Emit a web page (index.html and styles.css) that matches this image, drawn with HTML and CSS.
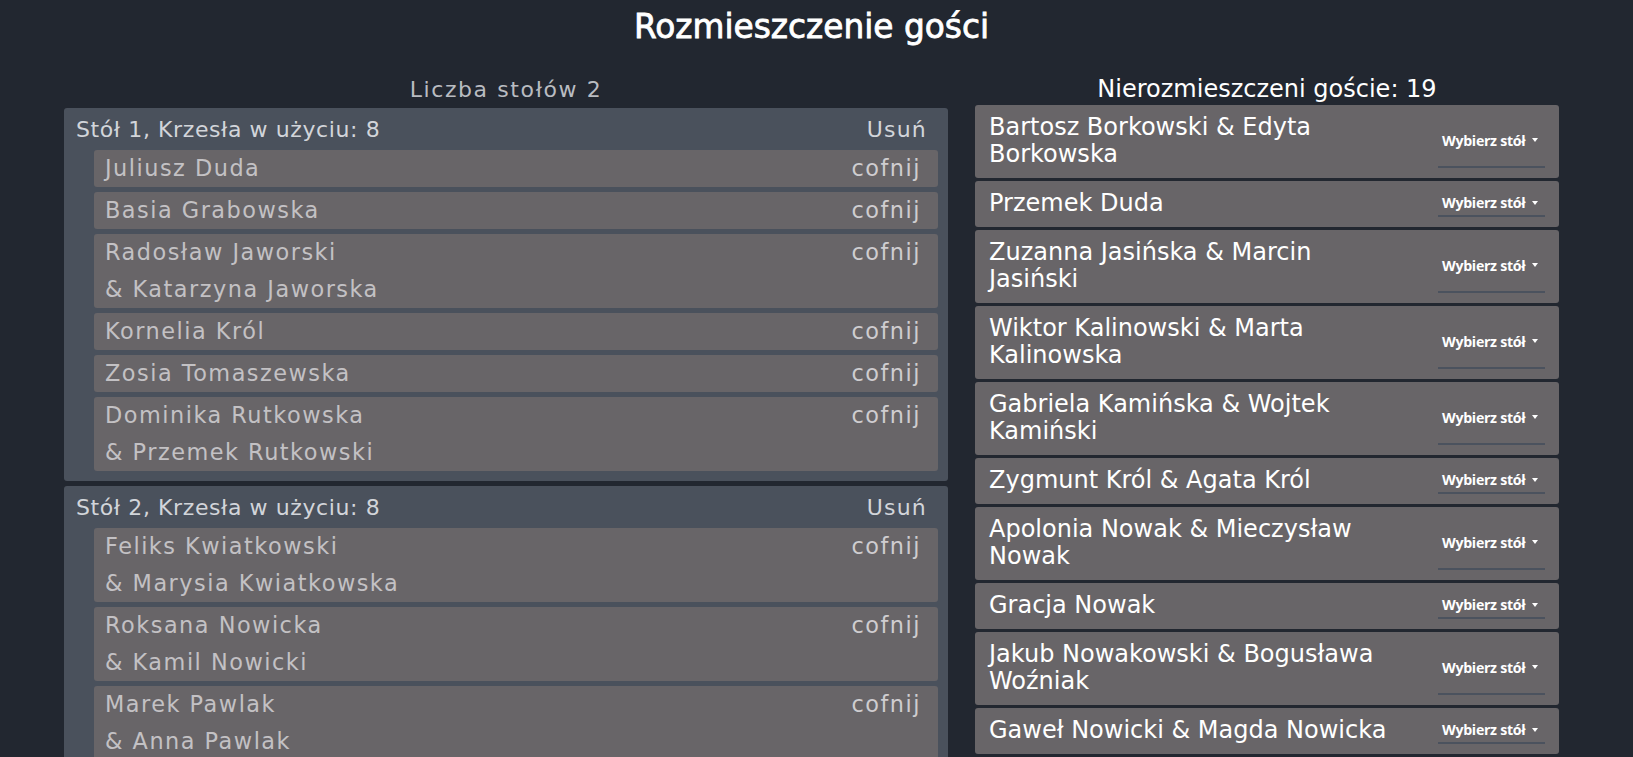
FILE: index.html
```html
<!DOCTYPE html>
<html lang="pl">
<head>
<meta charset="utf-8">
<title>Rozmieszczenie gości</title>
<link rel="stylesheet" href="styles.css">
</head>
<body>
<h1 class="title">Rozmieszczenie gości</h1>
<main class="layout">
  <section class="tables">
    <h2 class="tables-heading">Liczba stołów 2</h2>

    <div class="table-card">
      <div class="table-header"><span>Stół 1, Krzesła w użyciu: 8</span><button class="remove-btn">Usuń</button></div>
      <ul class="seated">
        <li class="seat"><div class="seat-names"><div>Juliusz Duda</div></div><button class="undo-btn">cofnij</button></li>
        <li class="seat"><div class="seat-names"><div>Basia Grabowska</div></div><button class="undo-btn">cofnij</button></li>
        <li class="seat"><div class="seat-names"><div>Radosław Jaworski</div><div>&amp; Katarzyna Jaworska</div></div><button class="undo-btn">cofnij</button></li>
        <li class="seat"><div class="seat-names"><div>Kornelia Król</div></div><button class="undo-btn">cofnij</button></li>
        <li class="seat"><div class="seat-names"><div>Zosia Tomaszewska</div></div><button class="undo-btn">cofnij</button></li>
        <li class="seat"><div class="seat-names"><div>Dominika Rutkowska</div><div>&amp; Przemek Rutkowski</div></div><button class="undo-btn">cofnij</button></li>
      </ul>
    </div>

    <div class="table-card">
      <div class="table-header"><span>Stół 2, Krzesła w użyciu: 8</span><button class="remove-btn">Usuń</button></div>
      <ul class="seated">
        <li class="seat"><div class="seat-names"><div>Feliks Kwiatkowski</div><div>&amp; Marysia Kwiatkowska</div></div><button class="undo-btn">cofnij</button></li>
        <li class="seat"><div class="seat-names"><div>Roksana Nowicka</div><div>&amp; Kamil Nowicki</div></div><button class="undo-btn">cofnij</button></li>
        <li class="seat"><div class="seat-names"><div>Marek Pawlak</div><div>&amp; Anna Pawlak</div></div><button class="undo-btn">cofnij</button></li>
      </ul>
    </div>
  </section>

  <section class="guests">
    <h2 class="guests-heading">Nierozmieszczeni goście: 19</h2>
    <ul class="guest-list">
      <li class="guest"><span class="guest-name">Bartosz Borkowski &amp; Edyta Borkowska</span><span class="select">Wybierz stół<svg class="caret" viewBox="0 0 6 4" width="6" height="4"><path d="M0 0h6L3 4z" fill="#fff"/></svg></span></li>
      <li class="guest"><span class="guest-name">Przemek Duda</span><span class="select">Wybierz stół<svg class="caret" viewBox="0 0 6 4" width="6" height="4"><path d="M0 0h6L3 4z" fill="#fff"/></svg></span></li>
      <li class="guest"><span class="guest-name">Zuzanna Jasińska &amp; Marcin Jasiński</span><span class="select">Wybierz stół<svg class="caret" viewBox="0 0 6 4" width="6" height="4"><path d="M0 0h6L3 4z" fill="#fff"/></svg></span></li>
      <li class="guest"><span class="guest-name">Wiktor Kalinowski &amp; Marta Kalinowska</span><span class="select">Wybierz stół<svg class="caret" viewBox="0 0 6 4" width="6" height="4"><path d="M0 0h6L3 4z" fill="#fff"/></svg></span></li>
      <li class="guest"><span class="guest-name">Gabriela Kamińska &amp; Wojtek Kamiński</span><span class="select">Wybierz stół<svg class="caret" viewBox="0 0 6 4" width="6" height="4"><path d="M0 0h6L3 4z" fill="#fff"/></svg></span></li>
      <li class="guest"><span class="guest-name">Zygmunt Król &amp; Agata Król</span><span class="select">Wybierz stół<svg class="caret" viewBox="0 0 6 4" width="6" height="4"><path d="M0 0h6L3 4z" fill="#fff"/></svg></span></li>
      <li class="guest"><span class="guest-name">Apolonia Nowak &amp; Mieczysław Nowak</span><span class="select">Wybierz stół<svg class="caret" viewBox="0 0 6 4" width="6" height="4"><path d="M0 0h6L3 4z" fill="#fff"/></svg></span></li>
      <li class="guest"><span class="guest-name">Gracja Nowak</span><span class="select">Wybierz stół<svg class="caret" viewBox="0 0 6 4" width="6" height="4"><path d="M0 0h6L3 4z" fill="#fff"/></svg></span></li>
      <li class="guest"><span class="guest-name">Jakub Nowakowski &amp; Bogusława Woźniak</span><span class="select">Wybierz stół<svg class="caret" viewBox="0 0 6 4" width="6" height="4"><path d="M0 0h6L3 4z" fill="#fff"/></svg></span></li>
      <li class="guest"><span class="guest-name">Gaweł Nowicki &amp; Magda Nowicka</span><span class="select">Wybierz stół<svg class="caret" viewBox="0 0 6 4" width="6" height="4"><path d="M0 0h6L3 4z" fill="#fff"/></svg></span></li>
    </ul>
  </section>
</main>
</body>
</html>
```
FILE: styles.css
```css
html{overflow:hidden;}
body{
  margin:0;
  background:#222730;
  font-family:"DejaVu Sans",sans-serif;
  color:#fff;
}
ul{list-style:none;margin:0;padding:0;}
button{font:inherit;color:inherit;background:none;border:0;cursor:pointer;}

.title{
  margin:7px 0 0;
  font-size:32.8px;
  line-height:40px;
  font-weight:normal;
  -webkit-text-stroke:0.8px #fff;
  text-align:center;
  color:#fff;
  padding-right:10px;
}

.layout{
  display:flex;
  align-items:flex-start;
  gap:27px;
  padding-left:64px;
  margin-top:29px;
}

.tables{width:884px;}
.tables-heading{
  margin:1px 0 5px;
  font-size:22px;
  line-height:26px;
  font-weight:normal;
  letter-spacing:1.6px;
  text-align:center;
  color:#b9bcc1;
}

.table-card{
  background:#4a515c;
  border-radius:3px;
  padding:0 10px 10px 12px;
  margin-bottom:5px;
}
.table-header{
  display:flex;
  justify-content:space-between;
  align-items:center;
  height:40px;
  padding-top:2px;
  font-size:22px;
  line-height:40px;
  letter-spacing:0.6px;
  color:#d2d5da;
}
.remove-btn{padding:0 11px 0 0;letter-spacing:1.2px;}

.seated{
  display:flex;
  flex-direction:column;
  gap:5px;
  margin-left:18px;
}
.seat{
  display:flex;
  justify-content:space-between;
  align-items:flex-start;
  background:#686568;
  border-radius:3px;
  padding:0 17px 0 11px;
  font-size:22.4px;
  line-height:37px;
  letter-spacing:1.5px;
  color:#c3c1c4;
}
.undo-btn{padding:0;letter-spacing:1.5px;line-height:37px;color:#cfcdd0;}

.guests{width:584px;}
.guests-heading{
  margin:0 0 3px;
  font-size:24px;
  line-height:26px;
  font-weight:normal;
  text-align:center;
  color:#fff;
}
.guest-list{display:flex;flex-direction:column;gap:3px;}
.guest{
  display:flex;
  align-items:stretch;
  gap:44px;
  background:#686568;
  border-radius:3px;
  padding:9px 14px 10px;
}
.guest-name{
  flex:1;
  font-size:24px;
  line-height:27px;
  color:#fff;
}
.select{
  flex:0 0 107px;
  display:flex;
  align-items:center;
  justify-content:space-between;
  padding:0 7px 0 4px;
  box-sizing:border-box;
  border-bottom:2px solid #4b525e;
  font-family:"Open Sans",sans-serif;
  font-weight:700;
  font-size:14.2px;
  letter-spacing:-0.3px;
  color:#fff;
}
.caret{display:block;width:6px;height:4px;}
```
